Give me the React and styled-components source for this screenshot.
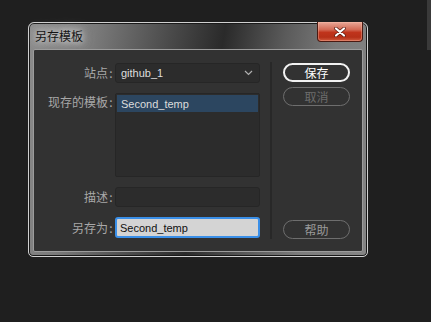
import styled, { createGlobalStyle } from "styled-components";

const GlobalStyle = createGlobalStyle`
  html, body {
    margin: 0;
    padding: 0;
    background: #1f1f1f;
  }
  * {
    box-sizing: border-box;
  }
`;

const Page = styled.div`
  display: flex;
  justify-content: space-between;
  align-items: flex-start;
  width: 431px;
  height: 322px;
  background: #1f1f1f;
  padding-left: 28px;
  overflow: hidden;
`;

const EdgeStrip = styled.div`
  width: 4px;
  height: 50px;
  background: #3a3a3a;
`;

const Window = styled.div`
  margin-top: 22px;
  width: 340px;
  height: 235px;
  display: flex;
  flex-direction: column;
  padding: 0 4px 4px;
  border: 1px solid #d0d0d0;
  border-radius: 6px 6px 5px 5px;
  background: linear-gradient(
    100deg,
    #8c8c8c 0%,
    #7a7a7a 18%,
    #4a4a4a 38%,
    #2a2a2a 52%,
    #5a5a5a 68%,
    #7c7c7c 82%,
    #858585 100%
  );
  box-shadow: inset 0 0 0 1px #1a1a1a;
`;

const TitleBar = styled.div`
  height: 26px;
  display: flex;
  justify-content: space-between;
  align-items: flex-start;
`;

const Title = styled.span`
  margin-top: 5px;
  margin-left: 2px;
  font-family: "Noto Sans CJK SC", sans-serif;
  font-size: 12px;
  line-height: 16px;
  color: #141414;
  text-shadow: 0 0 6px #d8d8d8, 0 0 10px #cfcfcf, 0 0 14px #bbb;
`;

const CloseButton = styled.div`
  width: 46px;
  height: 20px;
  margin-top: -1px;
  margin-right: 0;
  display: flex;
  align-items: center;
  justify-content: center;
  border: 1px solid #4a1a12;
  border-top: none;
  border-radius: 0 0 4px 4px;
  background: linear-gradient(
    #e9a898 0%,
    #d26a55 40%,
    #c0341c 55%,
    #b63018 80%,
    #d05a3e 100%
  );
  box-shadow: inset 0 0 0 1px rgba(255, 200, 180, 0.35);
`;

const Panel = styled.div`
  flex: 1;
  display: flex;
  padding: 13px 0 12px;
  background: #323232;
  border: 1px solid #9c9c9c;
  border-radius: 2px;
`;

const Form = styled.div`
  width: 226px;
  display: grid;
  grid-template-columns: 81px 145px;
  grid-template-rows: 20px 84px 20px 21px;
  row-gap: 10px;
`;

const Label = styled.div`
  padding-right: 1px;
  display: flex;
  justify-content: flex-end;
  align-items: ${(p) => (p.$top ? "flex-start" : "center")};
  padding-top: ${(p) => (p.$top ? "1px" : "0")};
  font-family: "Noto Sans CJK SC", sans-serif;
  font-size: 12px;
  line-height: 16px;
  color: #a8a8a8;
  white-space: nowrap;
`;

const Colon = styled.span`
  width: 6px;
  text-align: center;
`;

const Field = styled.div`
  display: flex;
  align-items: center;
  justify-content: space-between;
  padding: 0 6px;
  background: ${(p) => (p.$active ? "#d4d4d4" : "#2c2c2c")};
  border: ${(p) => (p.$active ? "2px solid #3a8fe8" : "1px solid #262626")};
  border-radius: 3px;
  font-family: "Liberation Sans", Arial, sans-serif;
  font-size: 11px;
  color: ${(p) => (p.$active ? "#111" : "#dedede")};
  padding-left: ${(p) => (p.$active ? "3px" : "5px")};
`;

const ListBox = styled.div`
  background: #2c2c2c;
  border: 1px solid #262626;
  border-radius: 2px;
  padding: 1px;
`;

const ListItem = styled.div`
  height: 17px;
  padding-left: 4px;
  display: flex;
  align-items: center;
  background: ${(p) => (p.$selected ? "#2c4660" : "transparent")};
  font-family: "Liberation Sans", Arial, sans-serif;
  font-size: 11px;
  color: #dcdcdc;
`;

const Divider = styled.div`
  width: 2px;
  margin: -1px 0 0 10px;
  height: 177px;
  background: #282828;
`;

const Buttons = styled.div`
  margin-left: 11px;
  width: 67px;
  display: flex;
  flex-direction: column;
  gap: 5px;
`;

const Pill = styled.div`
  height: 19px;
  display: flex;
  align-items: center;
  justify-content: center;
  border-radius: 10px;
  border: ${(p) => (p.$primary ? "2px solid #f2f2f2" : "1px solid #6e6e6e")};
  font-family: "Noto Sans CJK SC", sans-serif;
  font-size: 12px;
  color: ${(p) => (p.$primary ? "#ffffff" : p.$dim ? "#6c6c6c" : "#9a9a9a")};
  margin-top: ${(p) => (p.$push ? "auto" : "0")};
`;

function Chevron() {
  return (
    <svg width="9" height="6" viewBox="0 0 9 6">
      <path d="M1 1 L4.5 4.5 L8 1" fill="none" stroke="#b0b0b0" strokeWidth="1.2" />
    </svg>
  );
}

function CloseIcon() {
  return (
    <svg width="12" height="10" viewBox="0 0 12 10">
      <path d="M2 1.5 L10 8.5 M10 1.5 L2 8.5" stroke="#5a1a10" strokeWidth="3.6" strokeLinecap="round" />
      <path d="M2 1.5 L10 8.5 M10 1.5 L2 8.5" stroke="#ffffff" strokeWidth="2.2" strokeLinecap="round" />
    </svg>
  );
}

export default function App() {
  return (
    <>
      <GlobalStyle />
      <Page>
        <Window>
          <TitleBar>
            <Title>另存模板</Title>
            <CloseButton>
              <CloseIcon />
            </CloseButton>
          </TitleBar>
          <Panel>
            <Form>
              <Label>
                站点<Colon>:</Colon>
              </Label>
              <Field>
                github_1
                <Chevron />
              </Field>
              <Label $top>
                现存的模板<Colon>:</Colon>
              </Label>
              <ListBox>
                <ListItem $selected>Second_temp</ListItem>
              </ListBox>
              <Label>
                描述<Colon>:</Colon>
              </Label>
              <Field />
              <Label>
                另存为<Colon>:</Colon>
              </Label>
              <Field $active>Second_temp</Field>
            </Form>
            <Divider />
            <Buttons>
              <Pill $primary>保存</Pill>
              <Pill $dim>取消</Pill>
              <Pill $push>帮助</Pill>
            </Buttons>
          </Panel>
        </Window>
        <EdgeStrip />
      </Page>
    </>
  );
}
